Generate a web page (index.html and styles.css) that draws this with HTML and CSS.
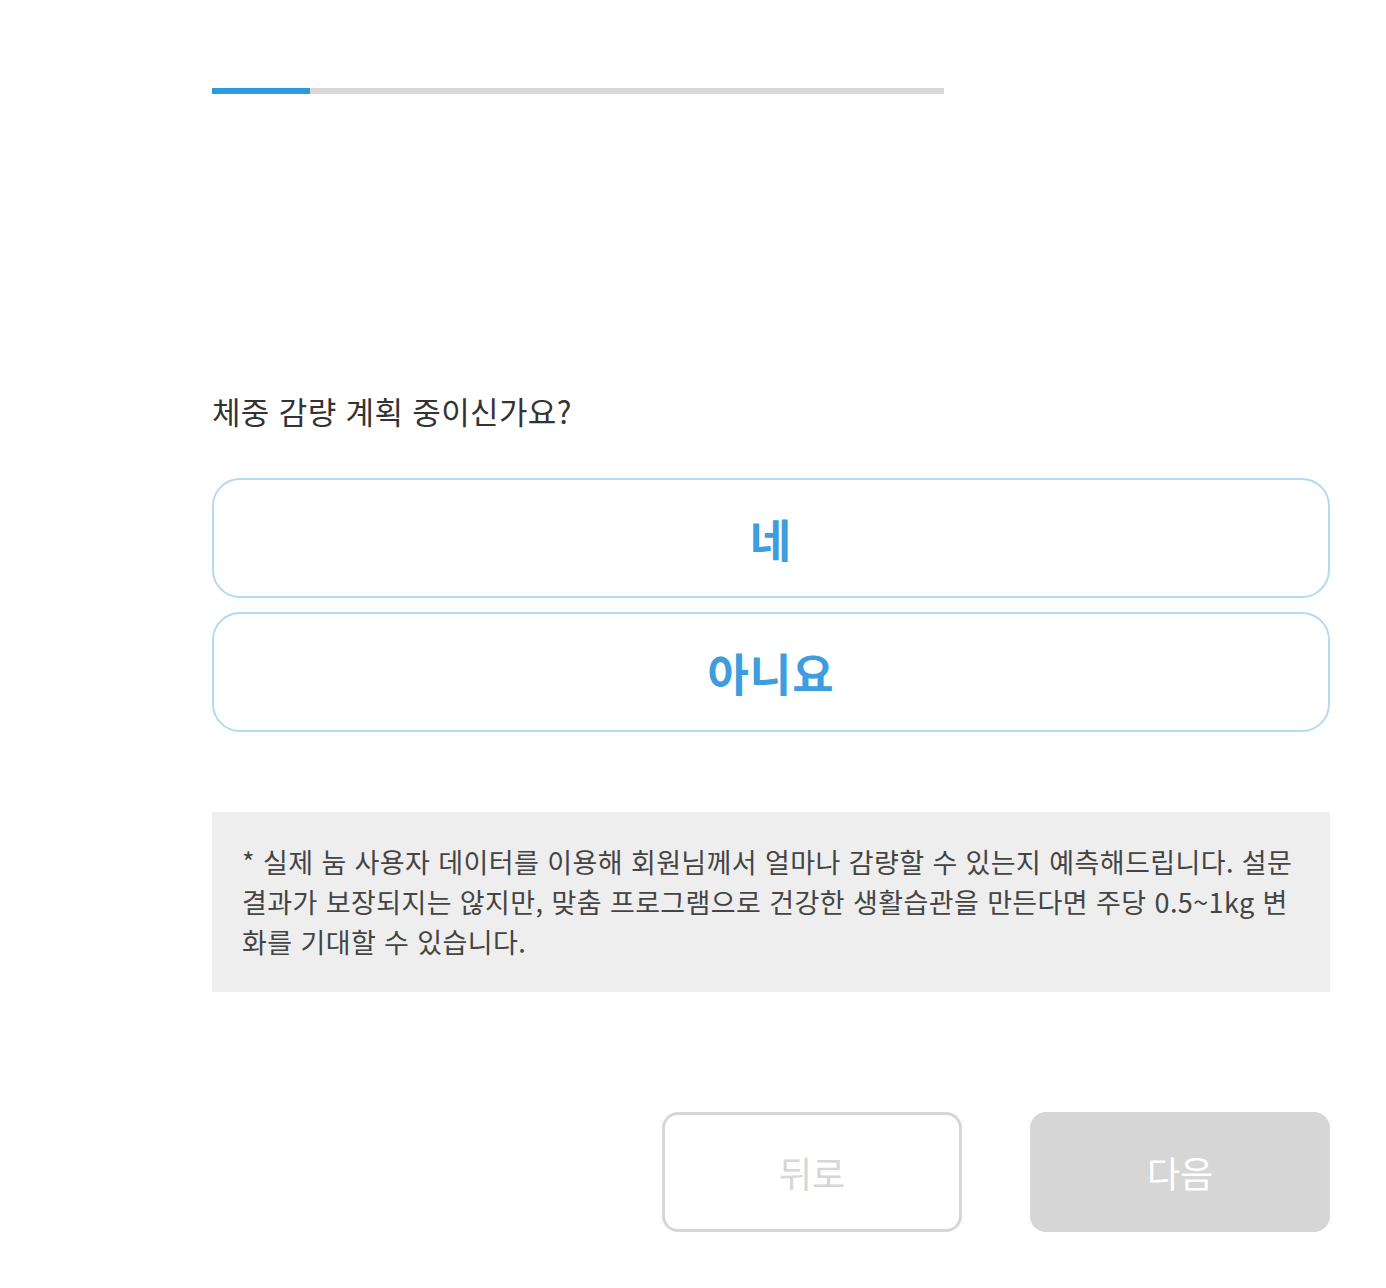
FILE: index.html
```html
<!DOCTYPE html>
<html lang="ko">
<head>
<meta charset="utf-8">
<link rel="stylesheet" href="styles.css">
</head>
<body>
<main class="page">
  <div class="progress"><div class="progress-fill" style="width: 98px"></div></div>
  <h1 class="question">체중 감량 계획 중이신가요?</h1>
  <div class="options">
    <button class="option">네</button>
    <button class="option">아니요</button>
  </div>
  <div class="note">* 실제 눔 사용자 데이터를 이용해 회원님께서 얼마나 감량할 수 있는지 예측해드립니다. 설문 결과가 보장되지는 않지만, 맞춤 프로그램으로 건강한 생활습관을 만든다면 주당 0.5~1kg 변화를 기대할 수 있습니다.</div>
  <div class="nav">
    <button class="nav-btn back">뒤로</button>
    <button class="nav-btn next">다음</button>
  </div>
</main>
</body>
</html>
```
FILE: styles.css
```css
html, body {
  margin: 0;
  padding: 0;
  background: #ffffff;
}
body {
  font-family: "Noto Sans CJK KR", "Noto Sans", sans-serif;
  color: #333333;
}
.page {
  width: 1118px;
  margin-left: 212px;
  padding-top: 88px;
}
.progress {
  width: 732px;
  height: 6px;
  background: #d8d8d8;
}
.progress-fill {
  height: 6px;
  background: #2a9be0;
}
.question {
  margin: 297px 0 0 0;
  font-size: 31px;
  font-weight: 400;
  line-height: 40px;
  letter-spacing: 0.35px;
  color: #333333;
}
.options {
  margin-top: 47px;
  display: flex;
  flex-direction: column;
  gap: 14px;
}
.option {
  height: 120px;
  width: 100%;
  border: 2px solid #b3daf2;
  border-radius: 28px;
  background: #ffffff;
  color: #3d9ddf;
  font-family: "Noto Sans CJK KR", sans-serif;
  font-size: 45px;
  font-weight: 700;
  letter-spacing: 1px;
  padding: 0;
}
.note {
  margin-top: 80px;
  background: #eeeeee;
  padding: 30px;
  font-size: 27px;
  line-height: 40px;
  letter-spacing: 0.4px;
  word-break: break-all;
  color: #444444;
}
.nav {
  margin-top: 120px;
  display: flex;
  justify-content: flex-end;
  gap: 68px;
}
.nav-btn {
  width: 300px;
  height: 120px;
  border-radius: 16px;
  font-family: "Noto Sans CJK KR", sans-serif;
  font-size: 36px;
  font-weight: 400;
  padding: 0;
}
.back {
  background: #ffffff;
  border: 3px solid #d6d6d6;
  color: #d6d6d6;
}
.next {
  background: #d6d6d6;
  border: none;
  color: #ffffff;
}
```
